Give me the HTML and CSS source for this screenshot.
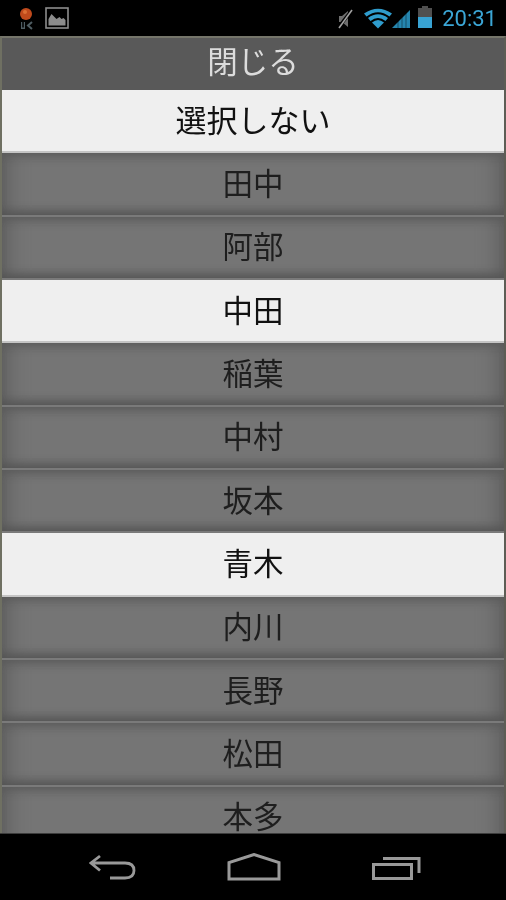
FILE: index.html
```html
<!DOCTYPE html>
<html lang="ja">
<head>
    <meta charset="UTF-8">
    <meta name="viewport" content="width=device-width, initial-scale=1.0">
    <title>選択</title>
    <link rel="stylesheet" href="styles.css">
</head>
<body>
    <div class="phone">
        <!-- ステータスバー -->
        <div class="status-bar">
            <div class="status-left">
                <svg class="icon-pin" width="18" height="24" viewBox="0 0 18 24">
                    <circle cx="9" cy="8" r="6" fill="#c04a1c"/>
                    <circle cx="8" cy="6" r="2" fill="#dc6f35"/>
                    <path d="M4 16v7h4v-7h-1.200v5.500H5.200V16z" fill="#4f5d63"/>
                    <path d="M15 16l-4 3.500 4 3.500" fill="none" stroke="#4f5d63" stroke-width="2"/>
                </svg>
                <svg class="icon-picture" width="24" height="22" viewBox="0 0 24 22">
                    <rect x="1" y="1" width="22" height="20" fill="none" stroke="#8c8c8c" stroke-width="1.600"/>
                    <path d="M3.500 18.500V12l3-5 3 3 2 2 3-2 2 2 2-1 2 2v5.500z" fill="#8c8c8c"/>
                </svg>
            </div>
            <div class="status-right">
                <svg width="20" height="24" viewBox="0 0 20 24">
                    <path d="M4 10h3l6-5v16l-6-5H4z" fill="#6e6e6e"/>
                    <path d="M3 22L17 4" stroke="#000" stroke-width="3.500"/>
                    <path d="M4 22L17 4" stroke="#a0a0a0" stroke-width="1.600"/>
                </svg>
                <svg class="icon-wifi" width="28" height="22" viewBox="0 0 28 22">
                    <path d="M0 6.500Q14-3 28 6.500l-2.500 3Q14 1 2.500 9.500z" fill="#2f9ccd"/>
                    <path d="M4 11Q14 3.500 24 11l-2.500 3Q14 8 6.500 14z" fill="#2f9ccd"/>
                    <path d="M8 15.500Q14 10.500 20 15.500L14 21.500z" fill="#2f9ccd"/>
                </svg>
                <svg class="icon-signal" width="20" height="24" viewBox="0 0 20 24">
                    <path d="M1 22L19 4v18z" fill="#2585ae"/>
                    <path d="M7 22v-8M11 22V10M15 22V6" stroke="#000" stroke-width="1" opacity=".4"/>
                </svg>
                <svg class="icon-battery" width="16" height="24" viewBox="0 0 16 24">
                    <path d="M5 0h6v2h4v20H1V2h4z" fill="#505050"/>
                    <path d="M1 11h14v11H1z" fill="#38a3d4"/>
                </svg>
                <span class="clock">20:31</span>
            </div>
        </div>

        <div class="screen">
            <div class="close-bar">閉じる</div>
            <div class="list">
                <div class="row selected first">選択しない</div>
                <div class="row">田中</div>
                <div class="row">阿部</div>
                <div class="row selected">中田</div>
                <div class="row">稲葉</div>
                <div class="row">中村</div>
                <div class="row">坂本</div>
                <div class="row selected">青木</div>
                <div class="row">内川</div>
                <div class="row">長野</div>
                <div class="row">松田</div>
                <div class="row">本多</div>
            </div>
        </div>

        <!-- ナビゲーションバー -->
        <div class="nav-bar">
            <svg width="48" height="26" viewBox="0 0 48 26">
                <path d="M11 2L2 9l9 7.500M3 9h33q9 0 9 7.500t-9 7.500H21" fill="none" stroke="#999" stroke-width="2.800"/>
            </svg>
            <svg width="54" height="28" viewBox="0 0 54 28">
                <path d="M2 26V9.500L27 1.500l25 8V26z" fill="none" stroke="#999" stroke-width="3"/>
            </svg>
            <svg width="50" height="26" viewBox="0 0 50 26">
                <path d="M2.500 10.500h38v14h-38z" fill="none" stroke="#999" stroke-width="3"/>
                <path d="M12 4.500h36V19" fill="none" stroke="#999" stroke-width="3"/>
            </svg>
        </div>
    </div>
</body>
</html>
```

FILE: styles.css
```css
* {
    box-sizing: border-box;
}

body {
    margin: 0;
    background-color: #000;
    font-family: "Noto Sans CJK JP", "Noto Sans", sans-serif;
}

.phone {
    display: flex;
    flex-direction: column;
    width: 506px;
    height: 900px;
    overflow: hidden;
    filter: blur(0.5px);
}

/* ステータスバー */
.status-bar {
    display: flex;
    flex: none;
    justify-content: space-between;
    align-items: center;
    height: 36px;
    padding: 0 9px 0 17px;
    background-color: #000;
}

.status-left,
.status-right {
    display: flex;
    align-items: center;
}

.status-left {
    gap: 10px;
}

.status-right {
    gap: 3px;
}

.icon-wifi {
    margin-left: 6px;
}

.icon-signal {
    margin-left: -4px;
}

.icon-battery {
    margin-left: 3px;
}

.clock {
    margin-left: 6px;
    color: #3ba6d6;
    font-family: Roboto, sans-serif;
    font-size: 22px;
}

/* 一覧 */
.screen {
    display: flex;
    flex: 1;
    flex-direction: column;
    min-height: 0;
    border-top: 2px solid #75756a;
    border-left: 2px solid #6f7062;
    border-right: 2px solid #5d5d55;
    background-color: #666;
}

.close-bar {
    display: flex;
    flex: none;
    justify-content: center;
    align-items: center;
    height: 52px;
    padding-bottom: 9px;
    background-color: #595959;
    color: #dcdcdc;
    font-size: 30.5px;
}

.list {
    flex: 1;
    min-height: 0;
    overflow: hidden;
}

.row {
    display: flex;
    justify-content: center;
    align-items: center;
    height: 63.33px;
    padding-bottom: 4px;
    border-bottom: 2px solid #7a7a7a;
    background-color: #757575;
    box-shadow: inset 0 9px 10px -6px #5a5a5a, inset 0 -9px 9px -5px #555, inset 20px 0 20px -14px #5e5e5e, inset -20px 0 20px -14px #5e5e5e;
    color: #1e1e1e;
    font-size: 30.5px;
}

.row.selected {
    padding-bottom: 4px;
    border-bottom-color: #c4c4c4;
    background-color: #efefef;
    box-shadow: none;
    color: #111;
}

.row.first {
    font-size: 31px;
}

.nav-bar {
    display: flex;
    flex: none;
    align-items: center;
    gap: 90px;
    height: 67px;
    padding-left: 89px;
    border-top: 1px solid #3c3c3c;
    background-color: #000;
}
```
